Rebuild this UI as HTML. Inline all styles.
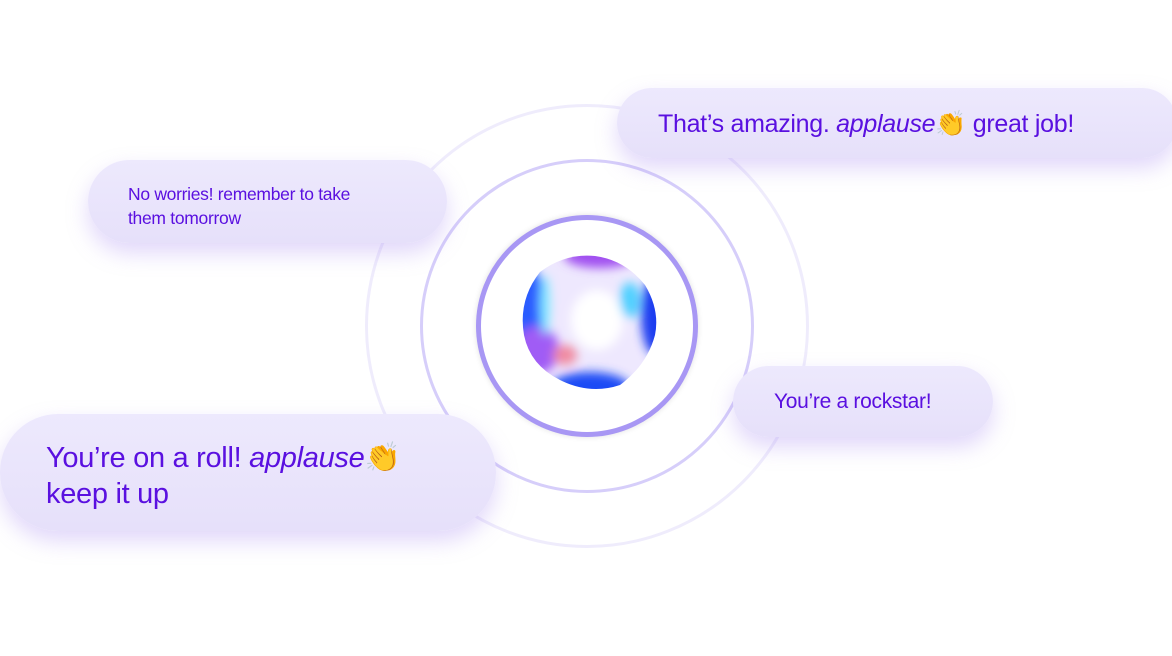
<!DOCTYPE html>
<html><head><style>
html,body{margin:0;padding:0;background:#fff;width:1172px;height:656px;overflow:hidden;position:relative;font-family:"Liberation Sans",sans-serif;}
.ring{position:absolute;border-radius:50%;box-sizing:border-box;}
.b{position:absolute;background:linear-gradient(180deg,#ede9fd,#e6e0fa);box-shadow:0 10px 22px rgba(170,140,240,.35);color:#5a10e0;box-sizing:border-box;letter-spacing:-0.3px;}
.b i{font-style:italic}
</style></head><body>
<div class="ring" style="left:365px;top:104px;width:444px;height:444px;border:3px solid #efecfc"></div>
<div class="ring" style="left:420px;top:159px;width:334px;height:334px;border:3px solid #d6cefa"></div>
<div class="ring" style="left:476px;top:215px;width:222px;height:222px;border:5px solid #a897f4;box-shadow:0 0 6px rgba(0,0,0,.12)"></div>
<svg style="position:absolute;left:515px;top:250px" width="150" height="150" viewBox="0 0 150 150">
<defs>
<filter id="bl"><feGaussianBlur stdDeviation="5"/></filter>
<clipPath id="c"><path d="M25 22 Q50 3 80 6 Q110 10 130 35 Q145 60 140 85 Q132 115 105 135 Q75 145 45 130 Q15 115 9 85 Q3 50 25 22Z"/></clipPath>
</defs>
<g clip-path="url(#c)">
<rect width="150" height="150" fill="#eee8fe"/>
<g filter="url(#bl)">
<ellipse cx="12" cy="60" rx="18" ry="45" fill="#2b5cff"/>
<ellipse cx="22" cy="100" rx="22" ry="24" fill="#a05cf5"/>
<ellipse cx="50" cy="105" rx="12" ry="10" fill="#f08aa0"/>
<ellipse cx="75" cy="138" rx="40" ry="16" fill="#1a4cf5"/>
<ellipse cx="140" cy="65" rx="14" ry="40" fill="#1a3cf0"/>
<ellipse cx="85" cy="6" rx="36" ry="12" fill="#a050f0"/>
<ellipse cx="115" cy="50" rx="10" ry="18" fill="#4fd0ff"/>
<ellipse cx="30" cy="55" rx="5" ry="30" fill="#80e8ff"/>
<ellipse cx="82" cy="70" rx="26" ry="30" fill="#ffffff"/>
</g></g>
</svg>
<div class="b" style="left:617px;top:88px;width:560px;height:70px;border-radius:35px;padding:22px 0 0 41px;font-size:25px">That’s amazing. <i>applause</i>👏 great job!</div>
<div class="b" style="left:88px;top:160px;width:359px;height:83px;border-radius:42px;padding:22px 0 0 40px;font-size:17.5px;line-height:24px">No worries! remember to take<br>them tomorrow</div>
<div class="b" style="left:733px;top:366px;width:260px;height:71px;border-radius:36px;padding:24px 0 0 41px;font-size:21px">You’re a rockstar!</div>
<div class="b" style="left:0;top:414px;width:496px;height:117px;border-radius:58px;padding:26px 0 0 46px;font-size:29px;line-height:36px">You’re on a roll! <i>applause</i>👏<br>keep it up</div>
</body></html>
